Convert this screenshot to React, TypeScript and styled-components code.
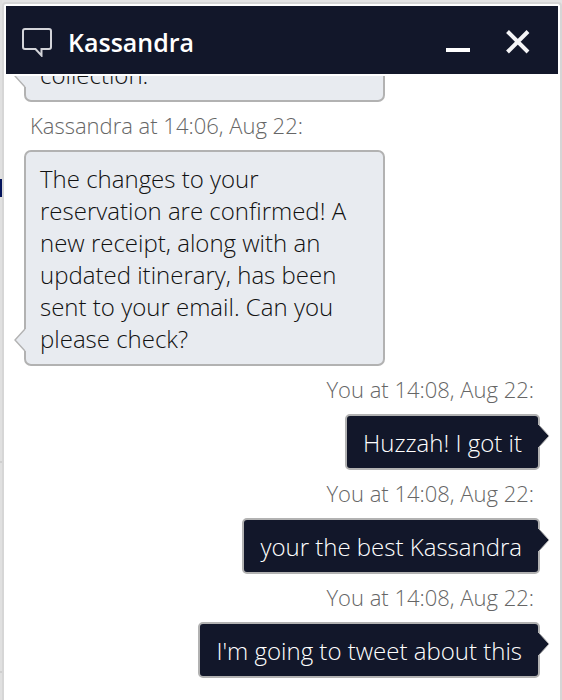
import React from "react";
import styled, { createGlobalStyle, css } from "styled-components";

const navy = "#12172a";
const outline = "#b2b2b2";

const GlobalStyle = createGlobalStyle`
  * { box-sizing: border-box; }
  body {
    margin: 0;
    background: #e3e3e3;
    font-family: "Open Sans", "Noto Sans", sans-serif;
  }
`;

const Page = styled.div`
  display: flex;
  height: 100vh;
  overflow: hidden;
`;

const PageEdge = styled.div`
  display: flex;
  flex-direction: column;
  width: 2px;
  background: #e0e0e0;
`;

const EdgeLink = styled.div`
  height: 18px;
  margin-top: 179px;
  background: #04145c;
`;

const EdgeRule = styled.div<{ $gap: number }>`
  height: 2px;
  margin-top: ${(p) => p.$gap}px;
  background: #cfcfcf;
`;

const ChatWindow = styled.section`
  display: flex;
  flex-direction: column;
  flex: 1;
  min-width: 0;
  margin-top: 2px;
  padding: 2px 2px 0;
  border: 2px solid #d6d6d6;
  border-bottom: 0;
  border-radius: 4px 4px 0 0;
  background: #fff;
`;

const Header = styled.header`
  display: flex;
  align-items: center;
  flex: none;
  height: 68px;
  padding: 4px 28px 0 16px;
  background: ${navy};
  color: #fff;
`;

const Title = styled.h1`
  flex: 1;
  margin: 0 0 0 16px;
  font-size: 25px;
  line-height: 32px;
  font-weight: 600;
`;

const HeaderButton = styled.button`
  display: flex;
  margin: 0 0 0 34px;
  padding: 0;
  border: 0;
  background: none;
  color: inherit;
  cursor: pointer;
`;

const Messages = styled.ol`
  display: flex;
  flex-direction: column;
  justify-content: flex-end;
  flex: 1;
  min-height: 0;
  margin: 2px 0 0;
  padding: 0 18px 22px;
  overflow: hidden;
  list-style: none;
`;

const Message = styled.li<{ $own?: boolean }>`
  display: flex;
  flex: none;
  flex-direction: column;
  align-items: ${(p) => (p.$own ? "flex-end" : "flex-start")};
`;

const Meta = styled.div`
  padding: 0 6px 2px;
  color: #666;
  font-size: 22px;
  line-height: 46px;
  font-weight: 300;
`;

const Bubble = styled.div<{ $own?: boolean }>`
  position: relative;
  padding: 11px 14px 9px;
  border: 2px solid ${outline};
  border-radius: 7px;
  font-size: 24px;
  line-height: 32px;
  font-weight: 300;
  ${(p) =>
    p.$own
      ? css`
          max-width: 70%;
          padding: 11px 16px 9px;
          border-radius: 5px;
          background: ${navy};
          color: #fff;
        `
      : css`
          width: 70%;
          background: #e8ebf0;
          color: #111;
        `}
`;

const Tail = styled.svg<{ $own?: boolean }>`
  position: absolute;
  ${(p) => (p.$own ? "right: -12px; top: 8px;" : "left: -12px; bottom: 12px;")}
`;

type Entry = { meta?: string; text: string; own?: boolean };

const entries: Entry[] = [
  { text: "collection." },
  {
    meta: "Kassandra at 14:06, Aug 22:",
    text: "The changes to your reservation are confirmed! A new receipt, along with an updated itinerary, has been sent to your email. Can you please check?",
  },
  { meta: "You at 14:08, Aug 22:", text: "Huzzah! I got it", own: true },
  { meta: "You at 14:08, Aug 22:", text: "your the best Kassandra", own: true },
  { meta: "You at 14:08, Aug 22:", text: "I'm going to tweet about this", own: true },
];

function BubbleTail({ own }: { own?: boolean }) {
  return own ? (
    <Tail $own width="12" height="24" viewBox="0 0 12 24" aria-hidden="true">
      <path d="M0 1L1 1L11 12L1 23L0 23Z" fill={navy} />
      <path d="M1 1L11 12L1 23" fill="none" stroke={outline} strokeWidth="1" />
    </Tail>
  ) : (
    <Tail width="12" height="24" viewBox="0 0 12 24" aria-hidden="true">
      <path d="M12 1L11 1L1 12L11 23L12 23Z" fill="#e8ebf0" />
      <path d="M11 1L1 12L11 23" fill="none" stroke={outline} strokeWidth="1.4" />
    </Tail>
  );
}

export default function App() {
  return (
    <>
      <GlobalStyle />
      <Page>
        <PageEdge>
          <EdgeLink />
          <EdgeRule $gap={264} />
          <EdgeRule $gap={208} />
        </PageEdge>
        <ChatWindow>
          <Header>
            <svg width="30" height="30" viewBox="0 0 30 30" fill="none" aria-hidden="true">
              <path
                d="M3 2H27Q29 2 29 4V20Q29 22 27 22H19.5V28.5L13.5 22H3Q1 22 1 20V4Q1 2 3 2Z"
                stroke="#d3d4d9"
                strokeWidth="2"
              />
            </svg>
            <Title>Kassandra</Title>
            <HeaderButton type="button" aria-label="Minimize">
              <svg width="26" height="26" viewBox="0 0 26 26">
                <path d="M2 21H26" stroke="#fff" strokeWidth="4" />
              </svg>
            </HeaderButton>
            <HeaderButton type="button" aria-label="Close">
              <svg width="26" height="26" viewBox="0 0 26 26">
                <path d="M3.5 2.5L24 23M24 2.5L3.5 23" stroke="#f4f4f6" strokeWidth="4" />
              </svg>
            </HeaderButton>
          </Header>
          <Messages>
            {entries.map((entry, i) => (
              <Message key={i} $own={entry.own}>
                {entry.meta && <Meta>{entry.meta}</Meta>}
                <Bubble $own={entry.own}>
                  {entry.text}
                  <BubbleTail own={entry.own} />
                </Bubble>
              </Message>
            ))}
          </Messages>
        </ChatWindow>
      </Page>
    </>
  );
}
